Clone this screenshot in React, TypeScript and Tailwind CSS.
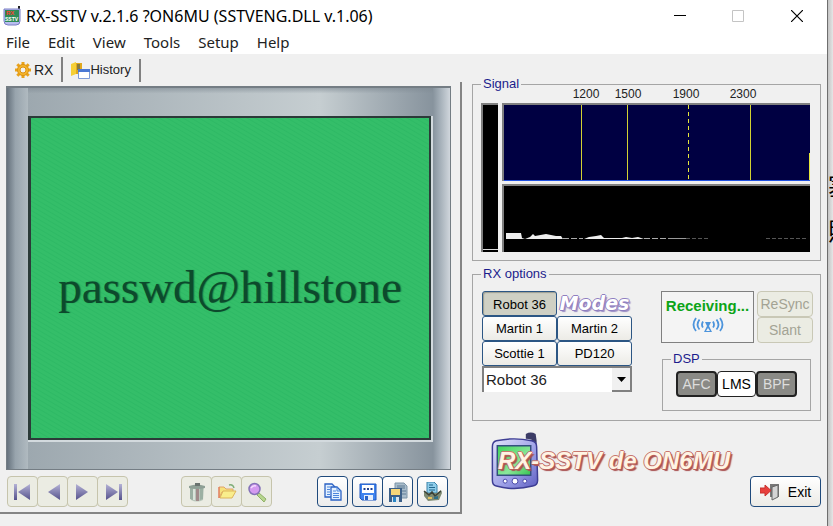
import clsx from "clsx";
import { useState } from "react";
import type { ReactNode } from "react";

const menuItems = ["File", "Edit", "View", "Tools", "Setup", "Help"];

const modes = ["Robot 36", "Martin 1", "Martin 2", "Scottie 1", "PD120"];

const DeviceIcon = ({ className }: { className?: string }) => (
  <svg viewBox="0 0 50 60" className={className} aria-hidden="true">
    <defs>
      <linearGradient id="device" x1="0" y1="0" x2="1" y2="1">
        <stop offset="0" stopColor="#e4e6fb" />
        <stop offset="0.6" stopColor="#9a9de6" />
        <stop offset="1" stopColor="#5c5cc0" />
      </linearGradient>
      <linearGradient id="lcd" x1="0" y1="0" x2="1" y2="1">
        <stop offset="0" stopColor="#3fd45a" />
        <stop offset="0.6" stopColor="#8be79a" />
        <stop offset="1" stopColor="#35c350" />
      </linearGradient>
    </defs>
    <path d="M36 3q5-3 10 0l1 7v28h-5V9q-3-1-6-1z" fill="#3c3c66" />
    <path
      d="M6 10q18-4 36 0q5 1 5 6l1 34q0 5-5 6q-19 5-37 0q-4-1-4-6L2 16q0-5 4-6z"
      fill="url(#device)"
      stroke="#3e3e94"
      strokeWidth="1.500"
    />
    <path d="M7 15h34v30H7z" fill="url(#lcd)" stroke="#34507e" strokeWidth="1.500" />
    <circle cx="15" cy="51" r="2" fill="#fff" stroke="#4848a8" />
    <circle cx="25" cy="51" r="3" fill="#fff" stroke="#4848a8" />
    <circle cx="35" cy="51" r="2" fill="#fff" stroke="#4848a8" />
  </svg>
);

const GearIcon = () => (
  <svg viewBox="0 0 18 18" className="size-[18px]" aria-hidden="true">
    <g stroke="#e8a21c" strokeWidth="3">
      <path d="M9 1v16M1 9h16M3.300 3.300l11.400 11.400M14.700 3.300L3.300 14.700" />
    </g>
    <circle cx="9" cy="9" r="5.500" fill="#f5b52c" stroke="#dd9210" />
    <circle cx="9" cy="9" r="3" fill="#f0f0f0" stroke="#dd9210" />
  </svg>
);

const HistoryIcon = () => (
  <svg viewBox="0 0 19 18" className="h-[18px] w-[19px]" aria-hidden="true">
    <path d="M0 2l5-2v12l-5 2z" fill="#f6cf35" />
    <path d="M5 1h6v11H5z" fill="#e0a81c" />
    <path d="M6 2h3v6H6z" fill="#8a7a3a" />
    <path d="M7.500 7.500h11v9h-11z" fill="#fff" stroke="#7d9bd8" />
    <path d="M7 7h12v3H7z" fill="#4a78d4" />
  </svg>
);

const NavIcon = ({ flip, bar }: { flip?: boolean; bar?: boolean }) => (
  <svg
    viewBox="0 0 20 20"
    className={clsx("size-5", flip && "-scale-x-100")}
    aria-hidden="true"
  >
    <defs>
      <linearGradient id="nav" x1="0" y1="0" x2="0" y2="1">
        <stop offset="0" stopColor="#b4b2d6" />
        <stop offset="1" stopColor="#56528c" />
      </linearGradient>
    </defs>
    {bar && <path d="M1 2h3v16H1z" fill="url(#nav)" />}
    <path d="M17 2v16L5 10z" fill="url(#nav)" />
  </svg>
);

const TrashIcon = () => (
  <svg viewBox="0 0 20 20" className="size-5" aria-hidden="true">
    <path d="M3 4h14l-1 14q-6 3-12 0z" fill="#b9c6bb" />
    <path d="M3 6v11l3 1V6zM13 6v12l3-1V6z" fill="#9cb0a3" />
    <path d="M9 5h3v14H9z" fill="#a08a8a" />
    <path d="M2 4q8-3 16 0v2q-8 2-16 0z" fill="#8fa096" />
    <path d="M8 1h5v3H8z" fill="#6b7470" />
    <path d="M7 7v11" stroke="#e6eee6" strokeWidth="1.500" />
  </svg>
);

const FolderIcon = () => (
  <svg viewBox="0 0 20 20" className="size-5" aria-hidden="true">
    <path d="M2 5h5l2 2h7v3H5L2 16z" fill="#f6e27c" stroke="#e0a468" />
    <path d="M3 16l3-7h13l-4 7z" fill="#f9ee8c" stroke="#ddb45a" />
    <path d="M12 3q4-1 5 3" fill="none" stroke="#7fae78" strokeWidth="1.500" />
    <path d="M2 5v11" stroke="#e26b5a" />
  </svg>
);

const MagnifierIcon = () => (
  <svg viewBox="0 0 20 20" className="size-5" aria-hidden="true">
    <path d="M12 11l7 6-2 3-7-7z" fill="#b7d68d" stroke="#8fb066" />
    <circle cx="7.500" cy="7" r="5.500" fill="#d49af0" stroke="#8573b8" strokeWidth="1.500" />
    <path d="M4 6q2-3 5-2" fill="none" stroke="#f4dcff" strokeWidth="1.500" />
  </svg>
);

const CopyIcon = () => (
  <svg viewBox="0 0 20 20" className="size-5" aria-hidden="true">
    <g fill="#e4f1ff" stroke="#2b62c4" strokeWidth="1.300">
      <path d="M2 2h7l3 3v10H2z" />
      <path d="M8 5h6l4 4v9H8z" />
    </g>
    <path
      d="M4 5h3M4 7.500h3M4 10h3M4 12.500h3M10 9h3M10 11.500h6M10 13.500h6M10 15.500h6M14 5v4h4"
      stroke="#4d86dc"
      fill="none"
    />
  </svg>
);

const FloppyIcon = () => (
  <svg viewBox="0 0 20 20" className="size-5" aria-hidden="true">
    <path d="M2 2h16v16H4l-2-2z" fill="#3f83ee" stroke="#1e57c0" />
    <path d="M4 3h12v8H4z" fill="#fff" />
    <path d="M5.500 6h2v2h-2zM9 6h2v2H9zM12.500 6h2v2h-2z" fill="#1f3f90" />
    <path d="M6 13h9v5H6z" fill="#e4eefc" />
    <path d="M7 14h3v4H7z" fill="#2a63c8" />
  </svg>
);

const SaveAllIcon = () => (
  <svg viewBox="0 0 20 20" className="size-5" aria-hidden="true">
    <path d="M7 1h9l3 3v12H7z" fill="#a9bccb" stroke="#7c95a8" />
    <path d="M9 4h8M9 6h8M14 9h4M14 12h4" stroke="#5d7b94" />
    <path d="M1 6h13v14H1z" fill="#3d6088" />
    <path d="M3 7h9v6H3z" fill="#f7d778" />
    <path d="M4 15h7v5H4z" fill="#dbe6ee" />
    <path d="M5 15h3v5H5z" fill="#2c86c4" />
  </svg>
);

const PrinterIcon = () => (
  <svg viewBox="0 0 20 20" className="size-5" aria-hidden="true">
    <path d="M4 0h7l3 3v8H4z" fill="#8fcdea" stroke="#3b82a8" />
    <path d="M6 3h4M6 5.500h6M6 8h6" stroke="#20668c" />
    <path d="M1 9l4 2h9l4-3 1 3-3 7-11 1-4-5z" fill="#7e8a72" />
    <path d="M1 9l5 4 3-3 3 4 6-5" fill="none" stroke="#3b4238" strokeWidth="1.500" />
    <path d="M5 15h4v2H5z" fill="#e3c25e" />
    <path d="M11 15l4-1v3h-4z" fill="#2e6f88" />
  </svg>
);

const ExitIcon = () => (
  <svg viewBox="0 0 20 18" className="h-[18px] w-5" aria-hidden="true">
    <path d="M10 1h9v13h-9z" fill="#777" />
    <path d="M12 4l6-2v12l-6 3z" fill="#d4d4d4" stroke="#666" />
    <path d="M0 5h5V2l6 5.500L5 13v-3H0z" fill="#e8403c" stroke="#c8302c" />
  </svg>
);

const AntennaIcon = () => (
  <svg
    viewBox="0 0 32 18"
    className="h-[18px] w-8"
    fill="none"
    stroke="#4c94dc"
    strokeWidth="1.800"
    aria-hidden="true"
  >
    <path d="M4 2q-5 7 0 13M7.500 3.500q-4 5.500 0 10M11 5.500q-2 3.500 0 6" />
    <path d="M28 2q5 7 0 13M24.500 3.500q4 5.500 0 10M21 5.500q2 3.500 0 6" />
    <path d="M13 6h6l-2 4 3 6h-8l3-6z" fill="#4c94dc" stroke="none" />
    <path d="M14 15l2-3 2 3z" fill="#f4f4f4" stroke="none" />
  </svg>
);

const ToolButton = ({
  label,
  disabled,
  children,
}: {
  label: string;
  disabled?: boolean;
  children: ReactNode;
}) => (
  <button
    aria-label={label}
    disabled={disabled}
    className={clsx(
      "flex h-[31px] w-[31px] items-center justify-center rounded border",
      disabled
        ? "border-[#c6c4ac] bg-[#ebece3]"
        : "border-[#1f4a7c] bg-linear-to-b from-white to-[#ececec]"
    )}
  >
    {children}
  </button>
);

const TitleBar = () => (
  <header className="flex h-[31px] items-center bg-white pl-[3px] font-['Noto_Sans',sans-serif] text-black">
    <svg
      viewBox="0 0 18 20"
      className="h-5 w-[18px] font-['Liberation_Sans',sans-serif]"
      aria-hidden="true"
    >
      <path d="M15 0h2v6h-2z" fill="#222" />
      <path d="M1 3h16v12q0 4-4 4H5q-4 0-4-4z" fill="#b9bdf0" stroke="#7a7fc4" />
      <path d="M2 4h14v12H2z" fill="#2e8b57" />
      <text x="3" y="9" fontSize="6" fontWeight="bold" fill="#ff3b30">
        RX
      </text>
      <text x="2" y="15" fontSize="5" fontWeight="bold" fill="#fff">
        SSTV
      </text>
    </svg>
    <h1 className="ml-[5px] flex-1 text-[16px] whitespace-nowrap">
      RX-SSTV v.2.1.6 ?ON6MU (SSTVENG.DLL v.1.06)
    </h1>
    <div className="flex">
      <button aria-label="Minimize" className="flex w-[58px] justify-center">
        <svg viewBox="0 0 12 12" className="size-3" stroke="#000">
          <path d="M0 5.500h12" />
        </svg>
      </button>
      <button aria-label="Maximize" disabled className="flex w-[58px] justify-center">
        <svg viewBox="0 0 12 12" className="size-3" fill="none" stroke="#c4c4c4">
          <path d="M.5.5h11v11H.5z" />
        </svg>
      </button>
      <button aria-label="Close" className="flex w-[60px] justify-center">
        <svg viewBox="0 0 12 12" className="size-3" stroke="#000" strokeWidth="1.200">
          <path d="M0 0l12 12M12 0L0 12" />
        </svg>
      </button>
    </div>
  </header>
);

const MenuBar = () => (
  <nav className="flex h-[23px] items-center gap-[18px] bg-white pl-1.5 font-['Noto_Sans',sans-serif] text-[15px] text-[#222]">
    {menuItems.map((item) => (
      <button key={item}>{item}</button>
    ))}
  </nav>
);

const Screen = () => (
  <div className="flex flex-1 border border-t-2 border-[#747d84]">
    <div className="w-[21px] bg-linear-to-r from-[#66727d] via-[#98a4ad] via-40% to-[#b0bac0]" />
    <div className="flex flex-1 flex-col bg-linear-to-r from-[#9da8af] via-[#c6ced1] via-72% to-[#87939d]">
      <div className="h-[28px] bg-linear-to-b from-[#7f8a93]/60 via-transparent via-20% to-transparent" />
      <div className="flex flex-1 border-r-2 border-b-2 border-[#d3dade]">
        <div className="flex min-h-[324px] flex-1 items-center justify-center border-2 border-l-3 border-[#2b3a38] bg-[repeating-linear-gradient(210deg,#34be69_0px,#34be69_2px,#2eb965_3px,#34be69_4px)] bg-[#32bd68]">
          <p className="mt-[18px] font-['Liberation_Serif',serif] text-[47px] leading-none text-[#0c4a2c] [text-shadow:1px_0_1px_#1c8048]">
            passwd@hillstone
          </p>
        </div>
      </div>
      <div className="h-[27px]" />
    </div>
    <div className="w-[17px] bg-linear-to-r from-[#87939d] via-[#a3aeb7] via-40% to-[#d0d6dc]" />
  </div>
);

const Toolbar = () => (
  <div className="flex items-center justify-between pt-1.5 pr-[3px] pb-[5px] pl-px">
    <div className="flex -space-x-px">
      <ToolButton label="First" disabled>
        <NavIcon bar />
      </ToolButton>
      <ToolButton label="Previous" disabled>
        <NavIcon />
      </ToolButton>
      <ToolButton label="Next" disabled>
        <NavIcon flip />
      </ToolButton>
      <ToolButton label="Last" disabled>
        <NavIcon flip bar />
      </ToolButton>
    </div>
    <div className="ml-2 flex -space-x-px">
      <ToolButton label="Delete" disabled>
        <TrashIcon />
      </ToolButton>
      <ToolButton label="Open" disabled>
        <FolderIcon />
      </ToolButton>
      <ToolButton label="Zoom" disabled>
        <MagnifierIcon />
      </ToolButton>
    </div>
    <div className="flex gap-1">
      <ToolButton label="Copy">
        <CopyIcon />
      </ToolButton>
      <div className="flex -space-x-px">
        <ToolButton label="Save">
          <FloppyIcon />
        </ToolButton>
        <ToolButton label="Save all">
          <SaveAllIcon />
        </ToolButton>
      </div>
      <ToolButton label="Print">
        <PrinterIcon />
      </ToolButton>
    </div>
  </div>
);

const Group = ({
  title,
  className,
  children,
}: {
  title: string;
  className?: string;
  children: ReactNode;
}) => (
  <fieldset className={clsx("min-w-0 border border-[#a5a5a5] pl-2", className)}>
    <legend className="px-0.5 text-[13px] leading-4 text-[#1c1c8c]">{title}</legend>
    {children}
  </fieldset>
);

const Signal = () => (
  <Group title="Signal" className="pr-[10px] pb-2">
    <div className="-mt-1.5 grid h-[17px] grid-cols-[63fr_42fr_42fr_74fr_40fr_47fr] pl-[21px] text-center text-xs leading-4 text-[#222]">
      <span />
      <span>1200</span>
      <span>1500</span>
      <span>1900</span>
      <span>2300</span>
    </div>
    <div className="flex gap-1">
      <div className="flex w-[17px] items-end border-t-2 border-l-2 border-[#808080] bg-black pb-0.5">
        <div className="h-px flex-1 bg-[#ddd]" />
      </div>
      <div className="flex flex-1 flex-col gap-[3px]">
        <svg
          viewBox="0 0 306 76"
          preserveAspectRatio="none"
          className="h-[78px] w-full border-t-2 border-l-2 border-[#808080] bg-[#000042]"
        >
          <path d="M77.500 0v76M123.500 0v76M246.500 0v76" stroke="#d2d232" />
          <path d="M184.500 0v76" stroke="#e6e63c" strokeDasharray="4 3" />
          <path d="M305.500 48v28" stroke="#e6e63c" />
          <path d="M0 75.500h306" stroke="#2050e0" />
        </svg>
        <svg
          viewBox="0 0 306 66"
          preserveAspectRatio="none"
          className="h-[68px] w-full border-t-2 border-l-2 border-[#808080] bg-black"
        >
          <path
            d="M2 53V47H17L18 52L21 53L26 51L29 48L31 50L42 48L52 50L57 50L59 53zM80 53L85 51L92 50L97 49L100 52L118 52L122 51L128 52L134 51L140 53z"
            fill="#eee"
          />
          <path d="M59 52.500h20M140 52.500h24" stroke="#aaa" strokeDasharray="6 2" />
          <path d="M164 52.500h18" stroke="#999" />
          <path d="M182 52.500h24M262 52.500h42" stroke="#555" strokeDasharray="4 2" />
        </svg>
      </div>
    </div>
  </Group>
);

const RxOptions = () => {
  const [mode, setMode] = useState("Robot 36");

  return (
    <Group title="RX options" className="mt-[5px]">
      <div className="flex justify-between pt-[9px] pr-[7px] pb-[9px] pl-px">
        <div className="w-[150px]">
          <div className="grid grid-cols-2">
            {modes.map((m, i) => (
              <button
                key={m}
                onClick={() => setMode(m)}
                className={clsx(
                  "h-[25px] rounded-[3px] border border-[#2c5684] text-[13px] text-black",
                  i === 0 && "order-first",
                  m === mode
                    ? "bg-[#cfd0c4] pt-0.5 shadow-[inset_1px_1px_1px_#9c9d92]"
                    : "bg-linear-to-b from-white to-[#ecebe6]"
                )}
              >
                {m}
              </button>
            ))}
            <span className="-order-1 col-start-2 row-start-1 text-center font-['DejaVu_Sans',sans-serif] text-[19px] leading-6 font-bold text-white italic [text-shadow:1px_0_#8f7fc0,-1px_0_#8f7fc0,0_1px_#8f7fc0,0_-1px_#8f7fc0,2px_2px_1px_#9a8cc4]">
              Modes
            </span>
          </div>
          <div className="relative">
            <select
              aria-label="Mode"
              value={mode}
              onChange={(e) => setMode(e.target.value)}
              className="h-[26px] w-full appearance-none border-t-2 border-l-2 border-[#808080] bg-white pl-0.5 text-[15px] text-[#222]"
            >
              {modes.map((m) => (
                <option key={m}>{m}</option>
              ))}
            </select>
            <span className="pointer-events-none absolute top-0.5 right-0 bottom-0 flex w-5 items-center justify-center border-r-2 border-b-2 border-[#808080] bg-[#f0f0f0]">
              <svg viewBox="0 0 9 5" className="h-[5px] w-[9px]">
                <path d="M0 0h9L4.500 5z" />
              </svg>
            </span>
          </div>
        </div>

        <div className="w-[152px]">
          <div className="flex gap-[3px]">
            <div className="flex h-[52px] w-[93px] flex-col items-center border border-[#808080] bg-[#f4f4f4] pt-1">
              <p className="text-[15px] leading-5 font-bold text-[#0ca418]">Receiving...</p>
              <AntennaIcon />
            </div>
            <div className="flex flex-1 flex-col text-sm text-[#a3a394]">
              <button disabled className="h-[26px] rounded border border-[#c9c8b6] bg-[#ebece3]">
                ReSync
              </button>
              <button disabled className="h-[26px] rounded border border-[#c9c8b6] bg-[#ebece3]">
                Slant
              </button>
            </div>
          </div>
          <Group title="DSP" className="mt-2 mr-0.5 ml-px pb-[13px]">
            <div className="flex justify-center pt-1 pr-2 text-sm">
              <button className="h-[26px] w-[41px] rounded border-2 border-[#222] bg-[#8a8a86] text-[#ddd]">
                AFC
              </button>
              <button className="h-[26px] w-[39px] rounded border border-[#222] bg-white text-black">
                LMS
              </button>
              <button className="h-[26px] w-[41px] rounded border-2 border-[#222] bg-[#8a8a86] text-[#ddd]">
                BPF
              </button>
            </div>
          </Group>
        </div>
      </div>
    </Group>
  );
};

const Footer = () => (
  <footer className="flex items-end justify-between pt-[10px]">
    <div className="relative mb-[17px] ml-[18px]">
      <DeviceIcon className="h-[59px] w-[50px]" />
      <p className="absolute top-[14px] left-2 font-['Liberation_Sans',sans-serif] text-2xl font-bold whitespace-nowrap text-[#fff4e4] italic [text-shadow:1px_0_#b8605a,-1px_0_#c87870,0_1px_#b8605a,0_-1px_#c87870,2px_2px_1px_#a85050]">
        RX-SSTV de ON6MU
      </p>
    </div>
    <button className="flex h-[31px] w-[71px] items-center justify-center gap-2 rounded border border-[#1f4a7c] bg-linear-to-b from-white to-[#ecebe6] text-sm text-black">
      <ExitIcon />
      Exit
    </button>
  </footer>
);

const App = () => {
  const [tab, setTab] = useState("RX");

  return (
    <div className="flex min-h-screen bg-[#e6e6e6] font-['Liberation_Sans',Arial,sans-serif]">
      <main className="flex flex-1 flex-col bg-[#f0f0f0]">
        <TitleBar />
        <MenuBar />
        <div className="grid flex-1 grid-cols-[462fr_365fr]">
          <section className="mb-3 flex flex-col pt-[3px]">
            <div role="tablist" className="flex h-[25px] items-stretch pl-0.5 text-sm text-[#222]">
              <button
                role="tab"
                aria-selected={tab === "RX"}
                onClick={() => setTab("RX")}
                className="flex items-center gap-0.5 border-r-2 border-[#808080] pr-2 pl-3"
              >
                <GearIcon />
                RX
              </button>
              <button
                role="tab"
                aria-selected={tab === "History"}
                onClick={() => setTab("History")}
                className="mt-0.5 flex items-center border-r-2 border-[#808080] pr-2 pl-2 text-[13px]"
              >
                <HistoryIcon />
                History
              </button>
            </div>
            <div className="flex flex-1 flex-col border-r-2 border-b-2 border-[#848484] pt-1 pr-[9px] pl-1.5">
              <Screen />
              <Toolbar />
            </div>
          </section>
          <section className="pt-[22px] pr-1.5 pl-[10px]">
            <Signal />
            <RxOptions />
            <Footer />
          </section>
        </div>
      </main>
      <aside className="w-1.5 overflow-hidden border-l border-[#6e6e6e] bg-linear-to-r from-[#c4c4c4] to-[#e6e6e6] pt-[162px] font-['Noto_Sans_CJK_SC',sans-serif] text-2xl leading-[45px] whitespace-nowrap text-black">
        <p>塞</p>
        <p>照</p>
      </aside>
    </div>
  );
};

export default App;
